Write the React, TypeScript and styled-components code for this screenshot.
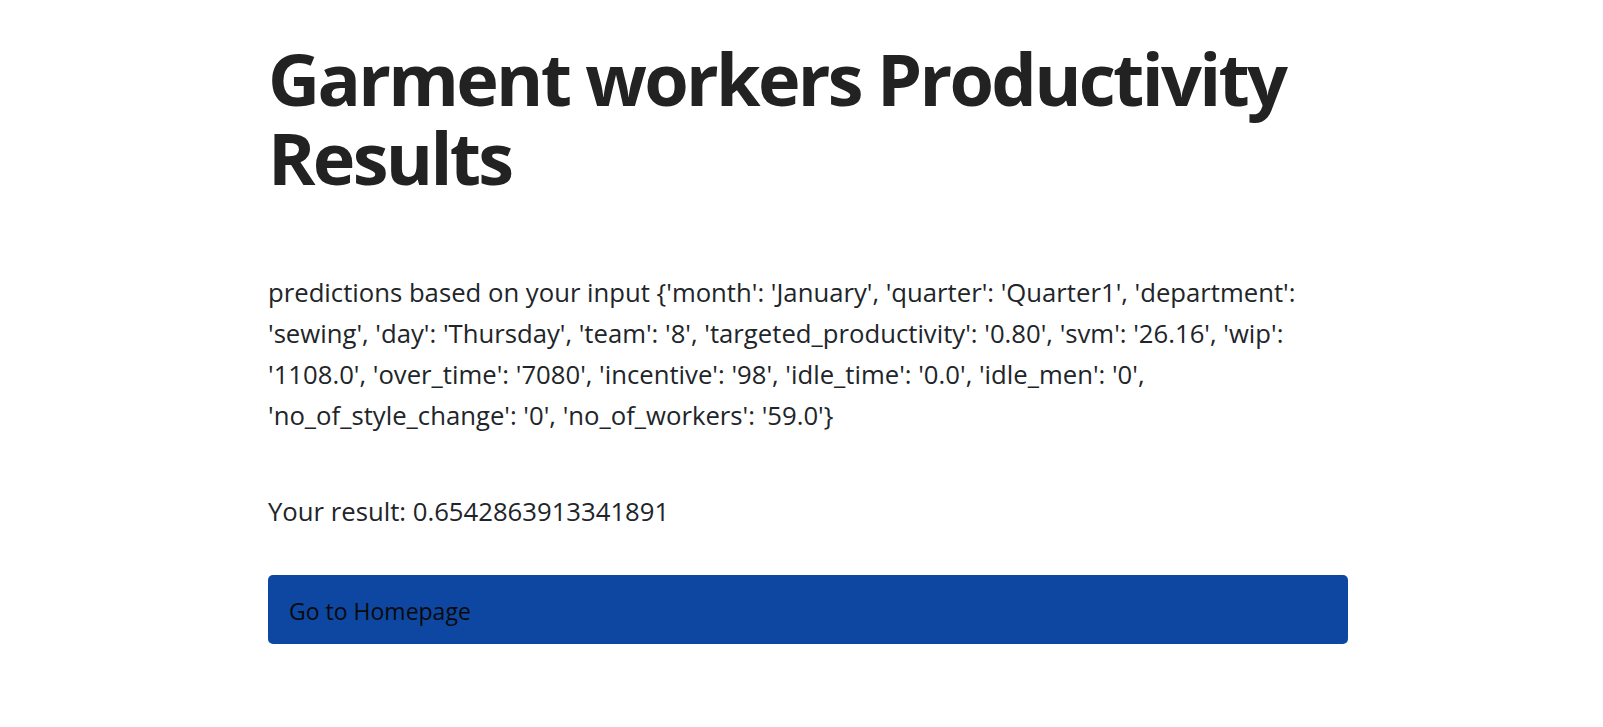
import React from 'react'
import styled, { createGlobalStyle } from 'styled-components'

const GlobalStyle = createGlobalStyle`
  body {
    margin: 0;
    background: #ffffff;
    font-family: 'Open Sans', 'Noto Sans', sans-serif;
    color: #212529;
  }
`

const Container = styled.main`
  width: 1080px;
  margin: 0 255px 0 268px;
  padding-top: 39px;
`

const Title = styled.h1`
  margin: 0;
  font-size: 72px;
  line-height: 79.2px;
  font-weight: 700;
  letter-spacing: -2.7px;
  color: #222222;
`

const Text = styled.p<{ $gap?: number }>`
  margin: ${props => props.$gap || 0}px 0 0 0;
  font-size: 25.7px;
  line-height: 41px;
  color: #212529;
`

const HomeButton = styled.a`
  display: flex;
  align-items: center;
  box-sizing: border-box;
  margin-top: 43px;
  height: 69px;
  padding: 2px 22px 0 21px;
  border-radius: 5px;
  background: #0e47a1;
  color: #0a0a0a;
  font-size: 23px;
  text-decoration: none;
  cursor: pointer;
`

const input = {
  month: 'January',
  quarter: 'Quarter1',
  department: 'sewing',
  day: 'Thursday',
  team: '8',
  targeted_productivity: '0.80',
  svm: '26.16',
  wip: '1108.0',
  over_time: '7080',
  incentive: '98',
  idle_time: '0.0',
  idle_men: '0',
  no_of_style_change: '0',
  no_of_workers: '59.0',
}

const formatInput = (data: Record<string, string>) =>
  '{' +
  Object.entries(data)
    .map(([key, value]) => `'${key}': '${value}'`)
    .join(', ') +
  '}'

export default function App() {
  const summary = `predictions based on your input ${formatInput(input)}`

  return (
    <>
      <GlobalStyle />
      <Container>
        <Title>Garment workers Productivity Results</Title>
        <Text $gap={75}>{summary}</Text>
        <Text $gap={55}>Your result: 0.6542863913341891</Text>
        <HomeButton href="#">Go to Homepage</HomeButton>
      </Container>
    </>
  )
}
